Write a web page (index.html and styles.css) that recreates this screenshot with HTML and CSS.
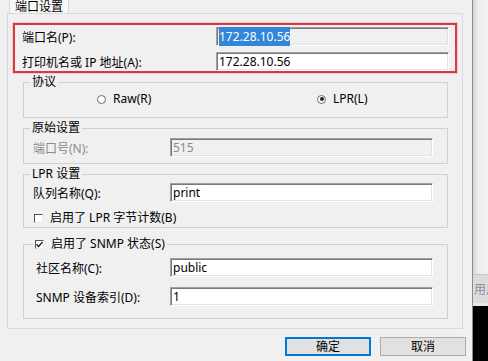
FILE: index.html
```html
<!DOCTYPE html>
<html lang="zh-CN">
<head>
    <meta charset="UTF-8">
    <title>端口设置</title>
    <link rel="stylesheet" href="styles.css">
</head>
<body>
    <div class="screen">
        <div class="dialog">
            <div class="tabs"><span class="tab">端口设置</span></div>

            <div class="page">
                <div class="highlight">
                    <div class="row">
                        <span class="label">端口名(P):</span>
                        <div class="field field-wide field-gray"><span class="selected">172.28.10.56</span></div>
                    </div>
                    <div class="row">
                        <span class="label">打印机名或 IP 地址(A):</span>
                        <div class="field field-wide">172.28.10.56</div>
                    </div>
                </div>

                <fieldset class="group group-protocol">
                    <legend>协议</legend>
                    <div class="radios">
                        <span class="option"><span class="radio"></span>Raw(R)</span>
                        <span class="option"><span class="radio checked"></span>LPR(L)</span>
                    </div>
                </fieldset>

                <fieldset class="group group-raw">
                    <legend>原始设置</legend>
                    <div class="line">
                        <span class="label disabled">端口号(N):</span>
                        <div class="field field-gray disabled">515</div>
                    </div>
                </fieldset>

                <fieldset class="group group-lpr">
                    <legend>LPR 设置</legend>
                    <div class="line">
                        <span class="label">队列名称(Q):</span>
                        <div class="field">print</div>
                    </div>
                    <div class="option check-line"><span class="checkbox"></span>启用了 LPR 字节计数(B)</div>
                </fieldset>

                <fieldset class="group group-snmp">
                    <legend class="legend-check"><span class="checkbox"><svg width="7" height="7" viewBox="0 0 7 7"><path d="M0.5 3.2 L2.6 5.4 L6.5 1" fill="none" stroke="#222" stroke-width="1.4"/></svg></span>启用了 SNMP 状态(S)</legend>
                    <div class="line">
                        <span class="label">社区名称(C):</span>
                        <div class="field">public</div>
                    </div>
                    <div class="line">
                        <span class="label">SNMP 设备索引(D):</span>
                        <div class="field">1</div>
                    </div>
                </fieldset>
            </div>

            <div class="buttons">
                <button class="button button-default">确定</button>
                <button class="button">取消</button>
            </div>
        </div>

        <div class="backdrop">
            <div class="backdrop-top"></div>
            <div class="backdrop-bar">用户</div>
            <div class="backdrop-gap"></div>
            <div class="backdrop-dark"></div>
        </div>
    </div>
</body>
</html>
```

FILE: styles.css
```css
* {
    box-sizing: border-box;
}
body {
    margin: 0;
    font-family: "Noto Sans", "Noto Sans CJK SC", sans-serif;
    font-size: 12px;
    color: #000;
    background-color: #f0f0f0;
}
.screen {
    display: flex;
    height: 361px;
    overflow: hidden;
}
.dialog {
    width: 473px;
    flex: none;
    background-color: #f0f0f0;
    border-right: 1px solid #8c8c8c;
}
.tabs {
    display: flex;
    height: 13px;
    padding-left: 9px;
}
.tab {
    height: 13px;
    padding: 0 5px;
    line-height: 13px;
    background-color: #f7f7f7;
    border: 1px solid #d9d9d9;
    border-top: none;
    border-bottom: none;
}
.page {
    margin-left: 7px;
    width: 456px;
    height: 316px;
    border: 1px solid #d9d9d9;
    background-color: #f0f0f0;
    padding-top: 9px;
}
.highlight {
    margin-left: 5px;
    width: 444px;
    height: 50px;
    border: 2px solid #d63a45;
    box-shadow: 0 0 0 1px rgba(235, 140, 150, 0.35);
    padding: 2px 6px 0 7px;
    display: flex;
    flex-direction: column;
    gap: 6px;
}
.row {
    display: flex;
    justify-content: space-between;
    align-items: center;
}
.field {
    width: 263px;
    height: 19px;
    border: 1px solid;
    border-color: #a0a0a0 #fff #fff #a0a0a0;
    box-shadow: inset 1px 1px 0 #7a7a7a, inset -1px -1px 0 #e3e3e3;
    background-color: #fff;
    padding-left: 2px;
    line-height: 17px;
    white-space: nowrap;
}
.field-wide {
    width: 233px;
}
.field-gray {
    background-color: #f0f0f0;
}
.selected {
    background-color: #3486d9;
    color: #fff;
    padding: 1px 0;
}
.disabled {
    color: #8a8a8a;
}
.group {
    margin: 3px 0 0 15px;
    width: 425px;
    border: 1px solid #d0d0d0;
    padding: 0;
    min-width: 0;
}
.group legend {
    margin-left: 6px;
    padding: 0 2px;
    line-height: 14px;
}
.group-protocol {
    margin-top: 2px;
    padding: 2px 0 10px;
}
.radios {
    display: grid;
    grid-template-columns: 220px auto;
    padding-left: 73px;
    line-height: 16px;
}
.option {
    display: flex;
    align-items: center;
    gap: 7px;
}
.radio {
    width: 9px;
    height: 9px;
    border-radius: 50%;
    border: 1px solid #6a6a6a;
    background-color: #fff;
    display: flex;
    align-items: center;
    justify-content: center;
}
.radio.checked::after {
    content: "";
    width: 4px;
    height: 4px;
    border-radius: 50%;
    background-color: #222;
}
.line {
    display: grid;
    grid-template-columns: 137px 263px;
    align-items: center;
    padding-left: 9px;
}
.group-raw {
    padding: 3px 0 6px;
}
.group-lpr {
    padding: 2px 0 1px;
}
.check-line {
    margin-top: 8px;
    padding-left: 10px;
    line-height: 16px;
}
.checkbox {
    width: 9px;
    height: 9px;
    border: 1px solid;
    border-color: #555 #e8e8e8 #e8e8e8 #555;
    background-color: #fff;
    display: flex;
    align-items: center;
    justify-content: center;
}
.group-snmp {
    margin-top: 9px;
    padding: 7px 0 12px;
}
.group-snmp .line {
    grid-template-columns: 134px 263px;
    padding-left: 12px;
}
.group-snmp .line + .line {
    margin-top: 10px;
}
.group-snmp legend.legend-check {
    margin-left: 9px;
    display: flex;
    align-items: center;
    gap: 7px;
}
.buttons {
    display: flex;
    justify-content: flex-end;
    gap: 9px;
    margin-top: 8px;
    padding-right: 6px;
}
.button {
    width: 86px;
    height: 19px;
    padding: 0;
    font-family: inherit;
    font-size: 12px;
    color: #000;
    background-color: #e1e1e1;
    border: 1px solid #adadad;
    line-height: 16px;
}
.button-default {
    border-color: #0078d7;
    box-shadow: inset 0 0 0 1px #0078d7;
}
.backdrop {
    flex: 1;
    display: flex;
    flex-direction: column;
    background-color: #f6f6f6;
}
.backdrop-top {
    height: 274px;
    background: linear-gradient(to right, #d4d4d4, #eeeeee 5px, #f6f6f6);
}
.backdrop-bar {
    height: 29px;
    background-color: #dcdcdc;
    border-top: 1px solid #c6c6c6;
    color: #8f8f8f;
    padding-left: 1px;
    line-height: 29px;
    white-space: nowrap;
    overflow: hidden;
}
.backdrop-gap {
    height: 3px;
    background-color: #e8e8e8;
}
.backdrop-dark {
    flex: 1;
    background-color: #000;
}
```
